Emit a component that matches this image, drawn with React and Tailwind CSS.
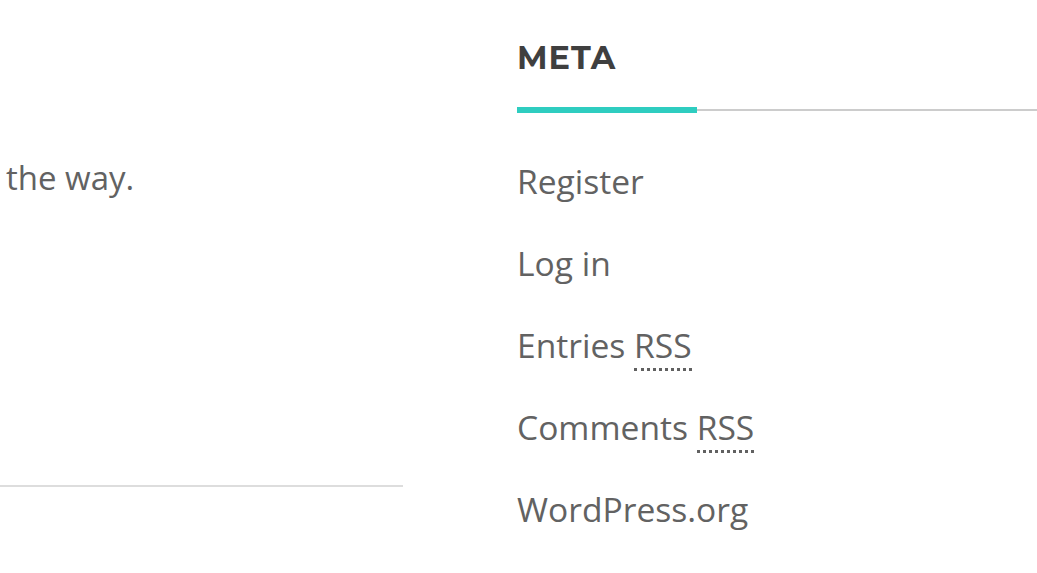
export default function App() {
  const links = ['Register', 'Log in', 'Entries RSS', 'Comments RSS', 'WordPress.org'];

  return (
    <div
      className="w-[1037px] h-[573px] bg-white overflow-hidden flex text-[#626262]"
      style={{ fontFamily: '"Open Sans", "Liberation Sans", sans-serif' }}
    >
      {/* Main column */}
      <div className="w-[403px] shrink-0 flex flex-col">
        <p className="pl-[6px] pt-[157px] text-[33px] leading-[41px]">the way.</p>
        <div className="mt-[287px] h-[2px] bg-[#dddddd]" />
      </div>

      {/* Sidebar widget */}
      <aside className="ml-[114px] flex-1">
        <h2
          className="pt-[37px] text-[32px] leading-[42px] font-bold text-[#3f3f3f] tracking-[1px]"
          style={{ fontFamily: 'Montserrat, Inter, "Liberation Sans", sans-serif' }}
        >
          META
        </h2>
        <div className="mt-[28px] flex items-center">
          <div className="w-[180px] h-[6px] bg-[#2ecdc0]" />
          <div className="flex-1 h-[2px] bg-[#cccccc]" />
        </div>
        <ul className="mt-[48px] flex flex-col gap-[41px] text-[33.6px] leading-[41px]">
          {links.map((l) => (
            <li key={l}>
              {l.endsWith('RSS') ? (
                <>
                  {l.replace('RSS', '')}
                  <abbr className="no-underline border-b-[3px] border-dotted border-[#616161]">RSS</abbr>
                </>
              ) : (
                l
              )}
            </li>
          ))}
        </ul>
      </aside>
    </div>
  );
}
